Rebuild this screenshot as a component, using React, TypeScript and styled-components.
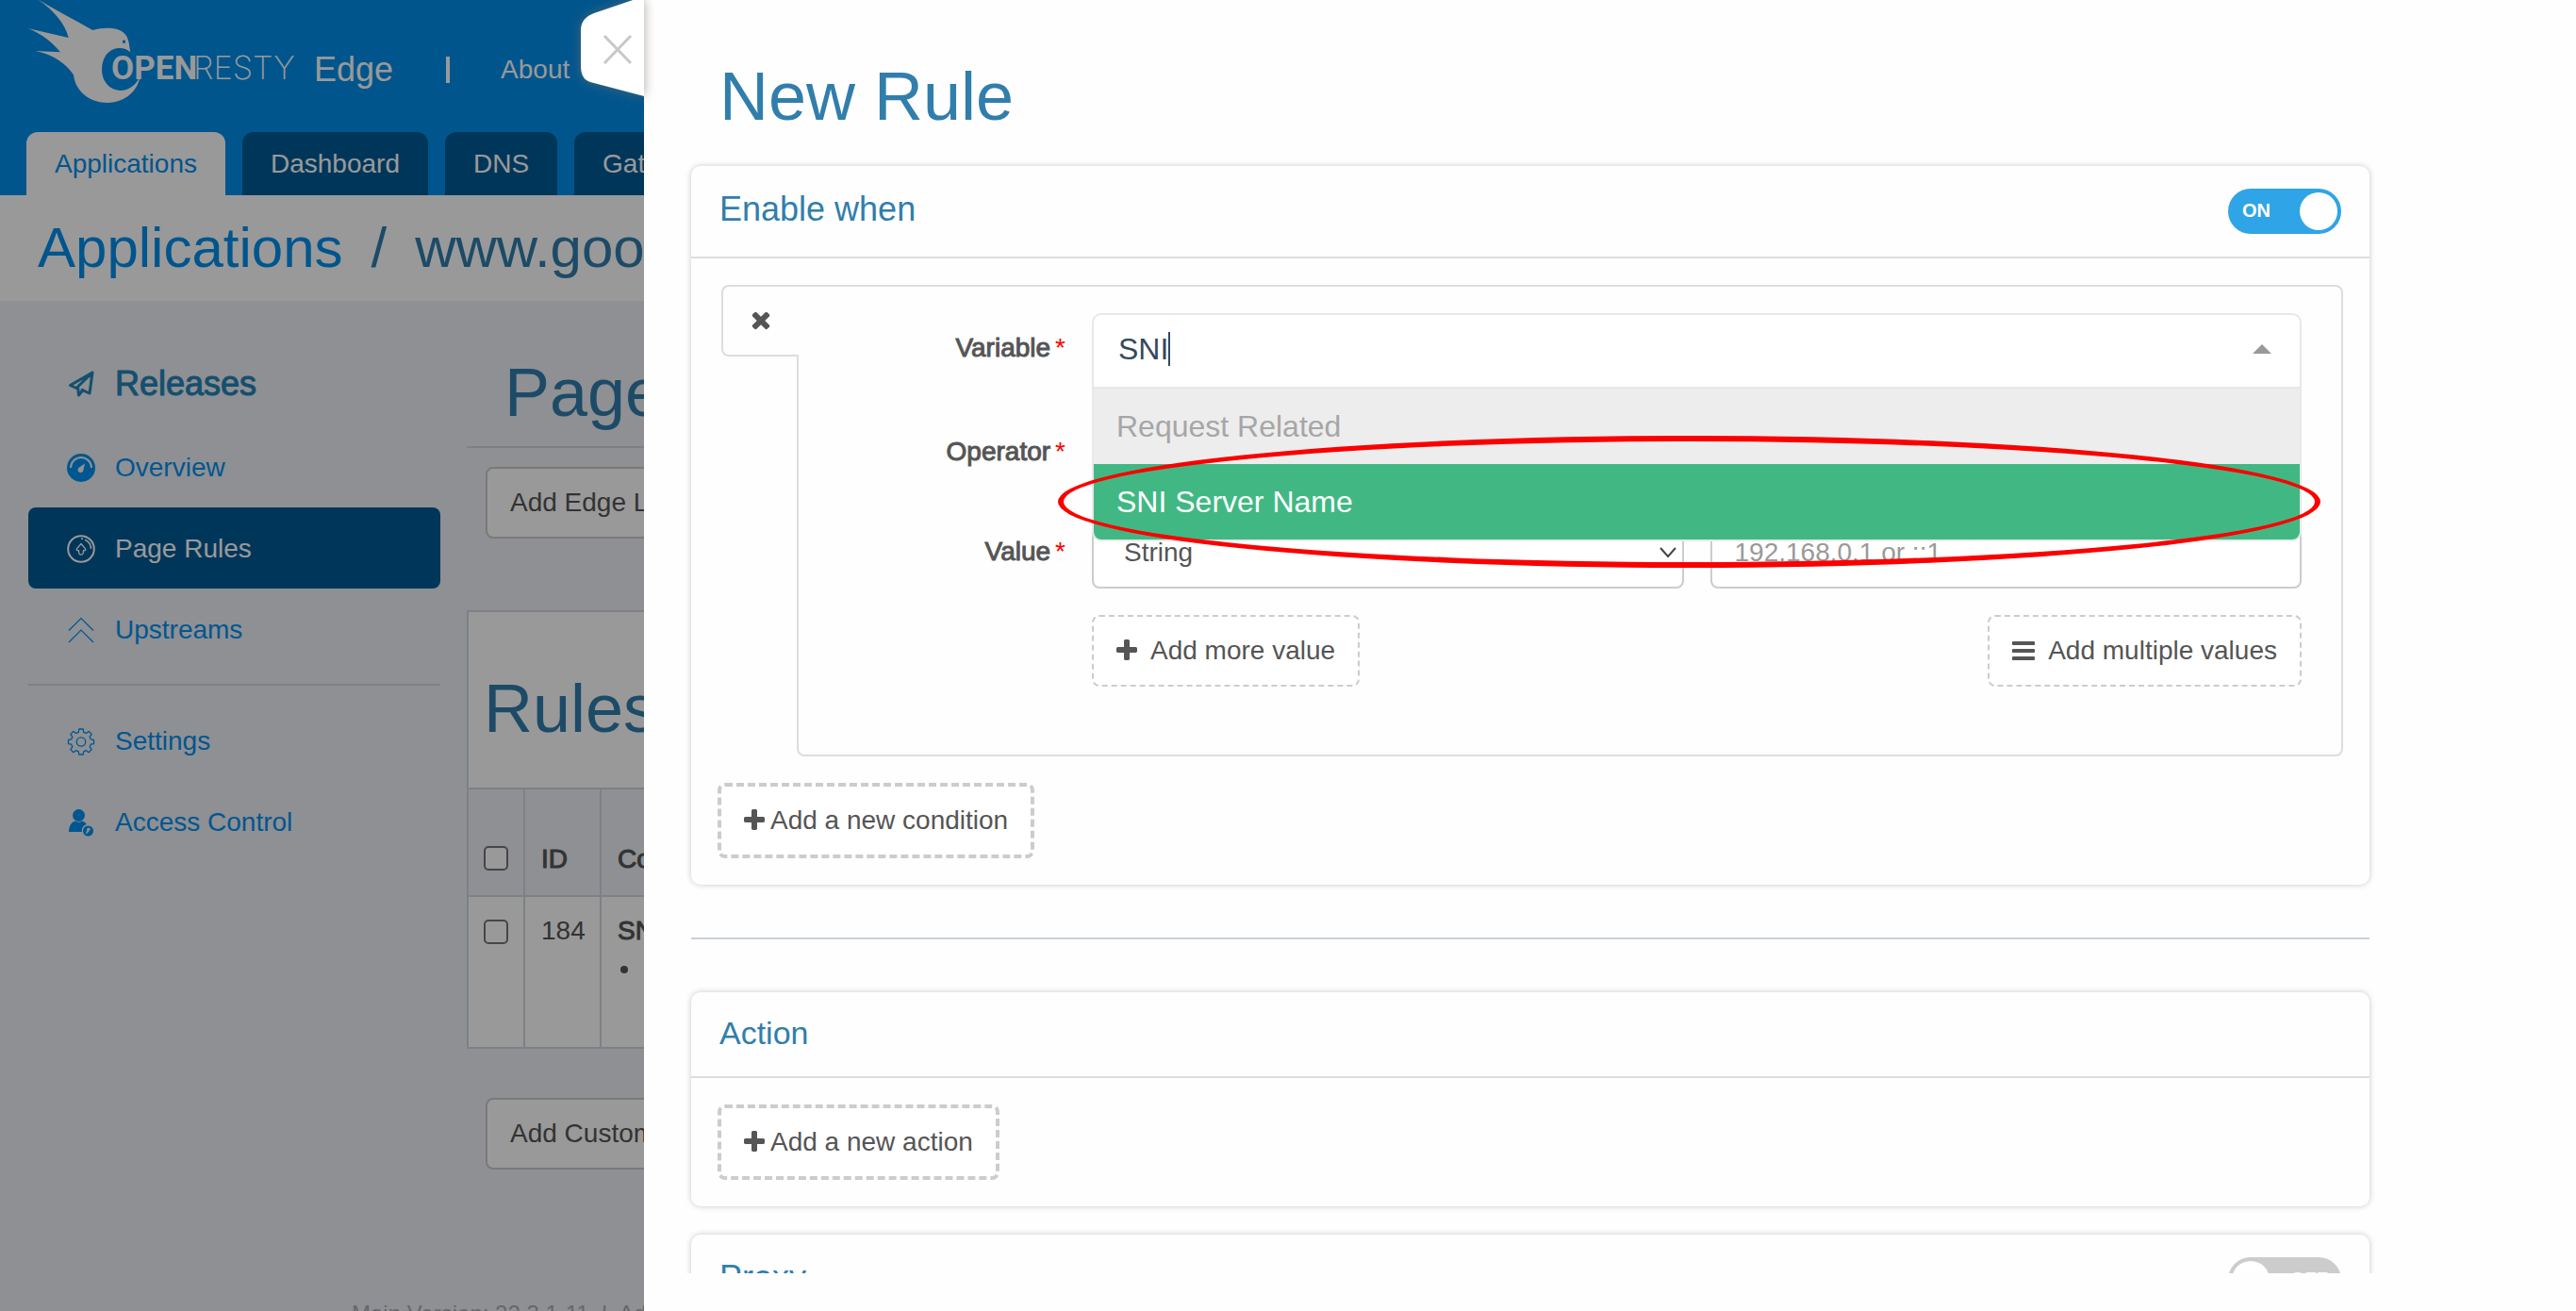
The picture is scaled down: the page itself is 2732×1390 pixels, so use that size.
import React, { useId, useState } from "react";
import styled, { createGlobalStyle, css } from "styled-components";

const color = {
  brand: "#008eeb",
  brandDark: "#005a96",
  link: "#0090f0",
  heading: "#317eac",
  text: "#555555",
  canvas: "#edf0f5",
  rule: "#d0d7de",
  line: "#dddddd",
  control: "#cccccc",
  picker: "#e8e8e8",
  required: "#ff0000",
};

const GlobalStyle = createGlobalStyle`
  *, *::before, *::after { box-sizing: border-box; }
  body {
    margin: 0;
    font-family: "Liberation Sans", Arial, Helvetica, sans-serif;
    font-size: 28px;
    line-height: 40px;
    color: ${color.text};
  }
  h1, h2, h3, p, ul { margin: 0; font-weight: 400; }
  button, input, select { font: inherit; color: inherit; }
  a { text-decoration: none; }
`;

const heavy = css`
  font-weight: 400;
  -webkit-text-stroke: 1px currentColor;
`;

/* ---------- page behind the drawer ---------- */

const Page = styled.div`
  position: relative;
  height: 100vh;
  overflow: hidden;
  background: ${color.canvas};
`;

const Header = styled.header`
  background: ${color.brand};
  color: #fff;
`;

const BrandBar = styled.div`
  display: flex;
  align-items: center;
  height: 140px;
  padding: 7px 20px 0;
  white-space: nowrap;
`;

const Logo = styled.svg`
  align-self: flex-start;
  flex: none;
  width: 300px;
  height: 120px;
  margin: -7px 13px 0 0;
`;

const Product = styled.span`
  font-size: 36px;
`;

const BrandDivider = styled.span`
  width: 4px;
  height: 28px;
  margin: 0 54px 0 56px;
  background: #fff;
`;

const HeaderLink = styled.a`
  color: #fff;
`;

const Tabs = styled.nav`
  display: flex;
  gap: 18px;
  padding-left: 28px;
`;

const Tab = styled.a<{ $active?: boolean }>`
  display: flex;
  align-items: center;
  height: 67px;
  padding: 0 30px;
  border-radius: 12px 12px 0 0;
  background: ${(p) => (p.$active ? "#fff" : color.brandDark)};
  color: ${(p) => (p.$active ? color.brand : "#fff")};
`;

const Breadcrumb = styled.nav`
  display: flex;
  align-items: center;
  gap: 30px;
  height: 112px;
  padding-left: 40px;
  background: #fff;
  color: ${color.heading};
  font-size: 60px;
  white-space: nowrap;
`;

const CrumbLink = styled.a`
  color: ${color.brand};
`;

const Body = styled.div`
  display: grid;
  grid-template-columns: 495px 1fr;
`;

const Sidebar = styled.nav`
  padding: 44px 28px 0 30px;
`;

const SideItem = styled.a<{ $active?: boolean }>`
  display: flex;
  align-items: center;
  gap: 21px;
  height: 86px;
  padding: 2px 0 0 41px;
  border-radius: 8px;
  color: ${(p) => (p.$active ? "#fff" : color.link)};
  background: ${(p) => (p.$active ? color.brandDark : "transparent")};

  svg {
    width: 30px;
    height: 30px;
    flex: none;
  }
`;

const SideHeading = styled(SideItem)`
  margin-bottom: 3px;
  color: #2384b8;
  font-size: 36px;
  ${heavy}
`;

const SideRule = styled.hr`
  height: 2px;
  margin: 15px 0;
  border: 0;
  background: ${color.rule};
`;

const Content = styled.main`
  padding-top: 57px;
`;

const PageTitle = styled.h1`
  padding: 0 40px 17px;
  border-bottom: 2px solid ${color.rule};
  color: ${color.heading};
  font-size: 72px;
  line-height: 80px;
`;

const PlainButton = styled.button`
  display: block;
  height: 76px;
  margin: 20px 0 0 20px;
  padding: 0 24px;
  border: 2px solid ${color.control};
  border-radius: 8px;
  background: #fff;
  white-space: nowrap;
`;

const RulesCard = styled.section`
  margin: 76px 0 52px;
  border: 2px solid ${color.rule};
  background: #fff;
`;

const RulesTitle = styled.h2`
  padding: 62px 16px 44px;
  color: ${color.heading};
  font-size: 72px;
  line-height: 80px;
`;

const RulesTable = styled.table`
  width: 100%;
  table-layout: fixed;
  border-spacing: 0;
  text-align: left;

  th,
  td {
    padding: 16px;
    border-right: 2px solid ${color.rule};
  }
  th {
    height: 116px;
    padding-bottom: 18px;
    border-top: 2px solid ${color.rule};
    border-bottom: 2px solid ${color.rule};
    background: ${color.canvas};
    vertical-align: bottom;
    ${heavy}
  }
  td {
    height: 159px;
    vertical-align: top;
  }
  th + th,
  td + td {
    padding-left: 17px;
    padding-right: 0;
  }
`;

const Col = styled.col<{ $w: number }>`
  width: ${(p) => p.$w}px;
`;

const Check = styled.input`
  display: block;
  appearance: none;
  width: 26px;
  height: 26px;
  margin: 8px 0;
  border: 2px solid #767676;
  border-radius: 5px;
  background: #fff;
`;

const Strong = styled.strong`
  ${heavy}
`;

const RuleList = styled.ul`
  padding-left: 26px;

  li {
    padding-left: 10px;
  }
`;

const Footer = styled.footer`
  margin-top: 138px;
  padding-left: 373px;
  color: #a8adb3;
  font-size: 24px;
  line-height: 30px;
  white-space: pre;
`;

const Backdrop = styled.div`
  position: fixed;
  inset: 0;
  background: rgba(0, 0, 0, 0.4);
`;

/* ---------- drawer ---------- */

const Drawer = styled.aside`
  position: fixed;
  top: 0;
  right: 0;
  width: 75%;
  height: 100vh;
  padding-bottom: 40px;
  background: #fefefe;
`;

const CloseTab = styled.button`
  position: absolute;
  top: 0;
  right: 100%;
  width: 84px;
  height: 120px;
  padding: 0;
  border: 0;
  background: none;

  svg {
    display: block;
    width: 84px;
    height: 120px;
    filter: drop-shadow(0 0 6px rgba(120, 110, 100, 0.6));
  }
`;

const Scroll = styled.div`
  height: 100%;
  overflow: hidden;
  padding: 62px 219px 0 50px;
`;

const DrawerTitle = styled.h2`
  margin: 0 0 34px 30px;
  color: ${color.heading};
  font-size: 72px;
  line-height: 80px;
`;

const Card = styled.section`
  border-radius: 10px;
  background: #fefefe;
  box-shadow: 0 0 6px rgba(0, 0, 0, 0.22);

  & + & {
    margin-top: 30px;
  }
`;

const CardHeader = styled.div<{ $toggle?: boolean }>`
  display: flex;
  align-items: center;
  justify-content: space-between;
  padding: ${(p) => (p.$toggle ? "24px 30px" : "23px 30px 26px")};
  border-bottom: 2px solid ${color.line};

  h3 {
    margin-bottom: ${(p) => (p.$toggle ? "4px" : "0")};
    color: ${color.heading};
    font-size: ${(p) => (p.$toggle ? "36px" : "34px")};
    line-height: 40px;
  }
`;

const CardBody = styled.div`
  padding: 28px;
`;

const Separator = styled.hr`
  height: 2px;
  margin: 56px 0;
  border: 0;
  background: #cbd1d7;
`;

const Track = styled.label<{ $on: boolean }>`
  position: relative;
  display: flex;
  align-items: center;
  justify-content: space-between;
  flex-direction: ${(p) => (p.$on ? "row" : "row-reverse")};
  width: 120px;
  height: 48px;
  padding: ${(p) => (p.$on ? "0 4px 0 15px" : "0 14px 0 4px")};
  border-radius: 24px;
  background: ${(p) => (p.$on ? "#2fa4e7" : "#cccccc")};
  color: #fff;
  font-size: 20px;
  font-weight: 700;
  line-height: 24px;

  input {
    position: absolute;
    inset: 0;
    margin: 0;
    opacity: 0;
  }
`;

const TrackText = styled.span`
  padding-bottom: 3px;
`;

const Knob = styled.span`
  width: 40px;
  height: 40px;
  border-radius: 50%;
  background: #fff;
`;

const Condition = styled.div`
  display: flex;
  align-items: flex-start;
  margin: 0 0 28px 4px;
`;

const RemoveTab = styled.button`
  position: relative;
  display: grid;
  place-items: center;
  flex: none;
  width: 82px;
  height: 76px;
  margin-right: -2px;
  padding: 0 0 2px;
  border: 2px solid ${color.line};
  border-right: 0;
  border-radius: 8px 0 0 8px;
  background: #fefefe;
`;

const ConditionBox = styled.div`
  flex: 1;
  display: grid;
  grid-template-columns: 283px 1fr;
  gap: 30px 28px;
  padding: 28px 42px 72px 0;
  border: 2px solid ${color.line};
  border-radius: 0 8px 8px 8px;
`;

const FieldLabel = styled.label`
  display: flex;
  align-items: center;
  justify-content: flex-end;
  gap: 5px;
  height: 74px;

  b {
    ${heavy}
  }
  span {
    color: ${color.required};
  }
`;

const Picker = styled.div`
  position: relative;
`;

const PickerBox = styled.div`
  display: flex;
  align-items: center;
  height: 80px;
  padding: 0 30px 4px 26px;
  border: 2px solid ${color.picker};
  border-radius: 10px 10px 0 0;
  background: #fff;
`;

const PickerInput = styled.input`
  field-sizing: content;
  padding: 0;
  border: 0;
  outline: 0;
  background: none;
  color: #35495e;
  font-size: 32px;
`;

const Caret = styled.span`
  width: 2px;
  height: 36px;
  background: #35495e;
`;

const Arrow = styled.span`
  margin-left: auto;
  border: solid transparent;
  border-width: 0 10px 10px;
  border-bottom-color: #999;
`;

const Options = styled.ul`
  position: absolute;
  z-index: 2;
  top: 80px;
  left: 0;
  right: 0;
  padding: 0;
  overflow: hidden;
  list-style: none;
  border: 2px solid ${color.picker};
  border-top: 0;
  border-radius: 0 0 10px 10px;
  background: #fff;
  font-size: 32px;
`;

const Option = styled.li<{ $group?: boolean }>`
  display: flex;
  align-items: center;
  height: 80px;
  padding: 0 24px;
  background: ${(p) => (p.$group ? "#ededed" : "#41b883")};
  color: ${(p) => (p.$group ? "#a6a6a6" : "#fff")};
`;

const Ring = styled.div`
  position: absolute;
  z-index: 3;
  top: 130px;
  left: -36px;
  right: -20px;
  height: 140px;
  border: 6px solid #fb0000;
  border-radius: 50%;
  pointer-events: none;
`;

const control = css`
  width: 100%;
  height: 76px;
  border: 2px solid ${color.control};
  border-radius: 8px;
  background: #fff;
`;

const SelectWrap = styled.div`
  display: grid;
  align-items: center;

  select,
  svg {
    grid-area: 1 / 1;
  }
  svg {
    justify-self: end;
    margin-right: 8px;
    pointer-events: none;
  }
`;

const Select = styled.select`
  ${control}
  appearance: none;
  padding: 0 32px;
`;

const TextInput = styled.input`
  ${control}
  padding: 0 24px;

  &::placeholder {
    color: #999;
    opacity: 1;
  }
`;

const ValueGroup = styled.div`
  display: grid;
  grid-template-columns: 1fr 1fr;
  gap: 28px;
`;

const DashedButton = styled.button<{ $thick?: boolean; $end?: boolean }>`
  display: flex;
  align-items: center;
  justify-self: ${(p) => (p.$end ? "end" : "start")};
  gap: ${(p) => (p.$thick ? "6px" : "14px")};
  height: ${(p) => (p.$thick ? "80px" : "76px")};
  padding: 0 24px;
  border: ${(p) => (p.$thick ? "4px" : "2px")} dashed ${color.control};
  border-radius: 8px;
  background: #fff;
  white-space: nowrap;
`;

/* ---------- icons ---------- */

const Plus = () => (
  <svg width="22" height="28" viewBox="192 0 1408 1792" fill="currentColor" aria-hidden="true">
    <path d="M1600 736v192q0 40-28 68t-68 28h-416v416q0 40-28 68t-68 28h-192q-40 0-68-28t-28-68v-416h-416q-40 0-68-28t-28-68v-192q0-40 28-68t68-28h416v-416q0-40 28-68t68-28h192q40 0 68 28t28 68v416h416q40 0 68 28t28 68z" />
  </svg>
);

const Bars = () => (
  <svg width="24" height="28" viewBox="128 0 1536 1792" fill="currentColor" aria-hidden="true">
    <path d="M1664 1344v128q0 26-19 45t-45 19h-1408q-26 0-45-19t-19-45v-128q0-26 19-45t45-19h1408q26 0 45 19t19 45zm0-512v128q0 26-19 45t-45 19h-1408q-26 0-45-19t-19-45v-128q0-26 19-45t45-19h1408q26 0 45 19t19 45zm0-512v128q0 26-19 45t-45 19h-1408q-26 0-45-19t-19-45v-128q0-26 19-45t45-19h1408q26 0 45 19t19 45z" />
  </svg>
);

const Times = () => (
  <svg width="28" height="28" viewBox="0 0 1792 1792" fill="currentColor" aria-hidden="true">
    <path d="M1490 1322q0 40-28 68l-136 136q-28 28-68 28t-68-28l-294-294-294 294q-28 28-68 28t-68-28l-136-136q-28-28-28-68t28-68l294-294-294-294q-28-28-28-68t28-68l136-136q28-28 68-28t68 28l294 294 294-294q28-28 68-28t68 28l136 136q28 28 28 68t-28 68l-294 294 294 294q28 28 28 68z" />
  </svg>
);

const Plane = () => (
  <svg viewBox="0 0 30 30" fill="none" stroke="currentColor" strokeWidth="3" strokeLinejoin="round" strokeLinecap="round" aria-hidden="true">
    <path d="M27 3 3.500 16.500 10 19.500M27 3 24 25 16 21.500M27 3 11.500 18 12.500 27 17 21.500" />
  </svg>
);

const Gauge = () => (
  <svg viewBox="0 0 30 30" aria-hidden="true">
    <circle cx="15" cy="15" r="15" fill="currentColor" />
    <path d="M4 15a11 11 0 0 1 22 0" fill="none" stroke={color.canvas} strokeWidth="2" />
    <path d="M19 10.500 17.500 17.200a3 3 0 1 1-4.600-2.600z" fill={color.canvas} />
  </svg>
);

const PageRule = () => (
  <svg viewBox="0 0 30 30" fill="none" stroke="currentColor" aria-hidden="true">
    <circle cx="15" cy="15" r="13.800" strokeWidth="2" />
    <path d="M19 5.200a11 11 0 0 1 6.500 9.800M15 4.200h2" strokeWidth="1.500" />
    <path d="m15 9.500 4.700 5.500c.6 1.200-.8 2-2.200 1.700l-.4 3.300c-.2 1.400-4 1.400-4.200 0l-.4-3.300c-1.400.3-2.800-.5-2.200-1.700z" strokeWidth="1.300" />
  </svg>
);

const Upstream = () => (
  <svg viewBox="0 0 30 30" fill="none" stroke="currentColor" strokeWidth="1.200" aria-hidden="true">
    <path d="M2 15.500 15 2.500 28 15.500M2 28 15 15 28 28" />
  </svg>
);

const Gear = () => (
  <svg viewBox="0 0 30 30" fill="none" stroke="currentColor" strokeWidth="1.300" strokeLinejoin="round" aria-hidden="true">
    <path d="M12.800 2h4.400l.5 3.300 2.700 1.100 2.700-2 3.100 3.100-2 2.700 1.100 2.600 3.200.5v4.400l-3.200.5-1.100 2.700 2 2.700-3.100 3.100-2.700-2-2.700 1.100-.5 3.200h-4.400l-.5-3.200-2.700-1.100-2.700 2-3.100-3.100 2-2.700-1.100-2.700-3.200-.5v-4.400l3.200-.5 1.100-2.600-2-2.700 3.100-3.100 2.700 2 2.700-1.100z" />
    <circle cx="15" cy="15.500" r="4.700" />
  </svg>
);

const UserKey = () => (
  <svg viewBox="0 0 30 30" fill="currentColor" aria-hidden="true">
    <circle cx="12.500" cy="7.500" r="6.500" />
    <path d="M2 25c0-6 2.500-10 6.500-11.500 2.500 1.500 5.500 1.500 8 0 2 .8 3.500 2 4.300 3.800-3.400.6-5.500 4-4.800 7.700z" />
    <circle cx="22.500" cy="24" r="5.500" />
    <path d="m20.500 27 1.500-6 2.500.6-1 2.200z" fill={color.canvas} stroke={color.canvas} strokeWidth=".8" />
  </svg>
);

const OpenRestyLogo = () => (
  <Logo viewBox="0 0 900 360" role="img" aria-label="OpenResty">
    <path
      fill="#fff"
      d="M57 -4 C108 30 146 72 158 120 L28 90 C74 108 104 132 132 166 L52 162 C112 174 152 204 174 238 C180 292 226 327 282 327 C340 327 380 286 385 244 C372 272 350 288 322 288 C288 286 264 258 264 222 C264 184 284 156 316 153 C332 152 344 156 355 166 C352 150 351 128 342 114 C326 88 280 84 235 96 C176 62 116 32 57 -4Z"
    />
    <rect x="330" y="128" width="9" height="9" fill={color.brand} />
    <text x="294" y="252" fill="#fff" fontFamily="Roboto, sans-serif" fontSize="105" fontWeight="700">OPEN</text>
    <text x="555" y="252" fill="#fff" fontFamily="Inter, sans-serif" fontSize="103" fontWeight="200">RESTY</text>
  </Logo>
);

/* ---------- pieces ---------- */

function Toggle({ initial, name }: { initial: boolean; name: string }) {
  const [on, setOn] = useState(initial);
  return (
    <Track $on={on}>
      <input type="checkbox" role="switch" aria-label={name} checked={on} onChange={() => setOn(!on)} />
      <TrackText>{on ? "ON" : "OFF"}</TrackText>
      <Knob />
    </Track>
  );
}

function RequiredLabel({ htmlFor, children }: { htmlFor: string; children: React.ReactNode }) {
  return (
    <FieldLabel htmlFor={htmlFor}>
      <b>{children}</b>
      <span>*</span>
    </FieldLabel>
  );
}

function DropDown({ id, option }: { id: string; option: string }) {
  return (
    <SelectWrap>
      <Select id={id}>
        <option>{option}</option>
      </Select>
      <svg width="18" height="12" viewBox="0 0 18 12" fill="none" stroke="#444" strokeWidth="2" aria-hidden="true">
        <path d="m1 1 8 9 8-9" />
      </svg>
    </SelectWrap>
  );
}

function ConditionEditor() {
  const id = useId();
  const [query, setQuery] = useState("SNI");
  return (
    <Condition>
      <RemoveTab aria-label="Remove condition">
        <Times />
      </RemoveTab>
      <ConditionBox>
        <RequiredLabel htmlFor={id + "variable"}>Variable</RequiredLabel>
        <Picker>
          <PickerBox>
            <PickerInput id={id + "variable"} value={query} onChange={(e) => setQuery(e.target.value)} />
            <Caret />
            <Arrow />
          </PickerBox>
          <Options>
            <Option $group>Request Related</Option>
            <Option>SNI Server Name</Option>
          </Options>
          <Ring />
        </Picker>

        <RequiredLabel htmlFor={id + "operator"}>Operator</RequiredLabel>
        <DropDown id={id + "operator"} option="" />

        <RequiredLabel htmlFor={id + "value"}>Value</RequiredLabel>
        <ValueGroup>
          <DropDown id={id + "value"} option="String" />
          <TextInput aria-label="Value" placeholder="192.168.0.1 or ::1" />
          <DashedButton>
            <Plus />
            Add more value
          </DashedButton>
          <DashedButton $end>
            <Bars />
            Add multiple values
          </DashedButton>
        </ValueGroup>
      </ConditionBox>
    </Condition>
  );
}

export default function App() {
  return (
    <>
      <GlobalStyle />
      <Page>
        <Header>
          <BrandBar>
            <OpenRestyLogo />
            <Product>Edge</Product>
            <BrandDivider />
            <HeaderLink href="#about">About</HeaderLink>
          </BrandBar>
          <Tabs>
            <Tab href="#applications" $active>Applications</Tab>
            <Tab href="#dashboard">Dashboard</Tab>
            <Tab href="#dns">DNS</Tab>
            <Tab href="#gateway">Gateway</Tab>
          </Tabs>
        </Header>
        <Breadcrumb>
          <CrumbLink href="#applications">Applications</CrumbLink>
          <span>/</span>
          <span>www.google.com</span>
        </Breadcrumb>
        <Body>
          <Sidebar>
            <SideHeading href="#releases"><Plane />Releases</SideHeading>
            <SideItem href="#overview"><Gauge />Overview</SideItem>
            <SideItem href="#page-rules" $active><PageRule />Page Rules</SideItem>
            <SideItem href="#upstreams"><Upstream />Upstreams</SideItem>
            <SideRule />
            <SideItem href="#settings"><Gear />Settings</SideItem>
            <SideItem href="#access"><UserKey />Access Control</SideItem>
          </Sidebar>
          <Content>
            <PageTitle>Page Rules</PageTitle>
            <PlainButton>Add Edge Language Rule</PlainButton>
            <RulesCard>
              <RulesTitle>Rules</RulesTitle>
              <RulesTable>
                <colgroup>
                  <Col $w={60} />
                  <Col $w={81} />
                  <col />
                </colgroup>
                <thead>
                  <tr>
                    <th><Check type="checkbox" aria-label="Select all rules" /></th>
                    <th>ID</th>
                    <th>Condition</th>
                  </tr>
                </thead>
                <tbody>
                  <tr>
                    <td><Check type="checkbox" aria-label="Select rule 184" /></td>
                    <td>184</td>
                    <td>
                      <Strong>SNI Server Name</Strong>
                      <RuleList>
                        <li>www.google.com</li>
                      </RuleList>
                    </td>
                  </tr>
                </tbody>
              </RulesTable>
            </RulesCard>
            <PlainButton>Add Custom Rule</PlainButton>
          </Content>
        </Body>
        <Footer>{"Main Version: 22.3.1-11  |  Admin"}</Footer>
      </Page>

      <Backdrop />
      <Drawer>
        <CloseTab aria-label="Close">
          <svg viewBox="0 0 84 120" aria-hidden="true">
            <path d="M84-4 31 14Q17 19 17 32V70Q17 84 27 87L84 102Z" fill="#fff" />
            <path d="M42 38 70 67M70 38 42 67" stroke="#c8c8c8" strokeWidth="3" fill="none" />
          </svg>
        </CloseTab>
        <Scroll>
          <DrawerTitle>New Rule</DrawerTitle>
          <Card>
            <CardHeader $toggle>
              <h3>Enable when</h3>
              <Toggle initial name="Enable when" />
            </CardHeader>
            <CardBody>
              <ConditionEditor />
              <DashedButton $thick>
                <Plus />
                Add a new condition
              </DashedButton>
            </CardBody>
          </Card>
          <Separator />
          <Card>
            <CardHeader>
              <h3>Action</h3>
            </CardHeader>
            <CardBody>
              <DashedButton $thick>
                <Plus />
                Add a new action
              </DashedButton>
            </CardBody>
          </Card>
          <Card>
            <CardHeader $toggle>
              <h3>Proxy</h3>
              <Toggle initial={false} name="Proxy" />
            </CardHeader>
          </Card>
        </Scroll>
      </Drawer>
    </>
  );
}
